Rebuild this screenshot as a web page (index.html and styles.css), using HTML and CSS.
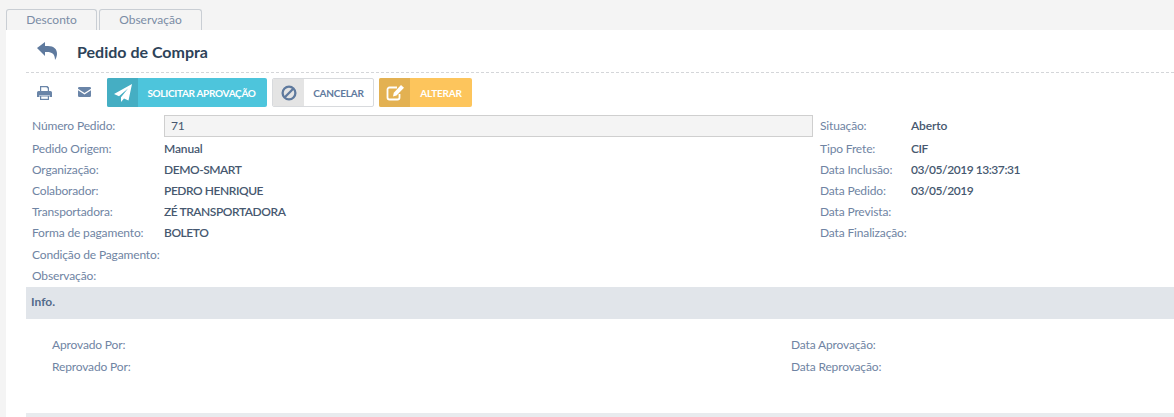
FILE: index.html
```html
<!DOCTYPE html>
<html>
<head>
    <meta charset="utf-8">
    <title>Pedido de Compra</title>
    <link rel="stylesheet" href="styles.css">
</head>
<body>
    <div class="tabs">
        <div class="tab tab-first">Desconto</div>
        <div class="tab tab-second">Observação</div>
    </div>
    <div class="panel">
        <div class="head">
            <svg class="back" viewBox="0 0 20 18"><path d="M0 6 8 0v4h3c6 0 9 3 9 8 0 2-1 4.500-2 6 0-6-3-8-8-8H8v4z" fill="#5f7a9e"/></svg>
            <h1 class="title">Pedido de Compra</h1>
        </div>
        <div class="toolbar">
            <svg class="ico-print" viewBox="0 0 15 14"><path d="M3 0h7.500L12 1.500V6H3zM4.200 1.200v3.800h6.600V2.200H9.800v-1z" fill="#6a85a8" fill-rule="evenodd"/><path d="M1.500 5h12A1.500 1.500 0 0 1 15 6.500V11h-2.500V9h-10v2H0V6.500A1.500 1.500 0 0 1 1.500 5z" fill="#6a85a8"/><path d="M3 9.500h9V14H3z" fill="#6a85a8"/><path d="M4.200 10.500h6.600v2.300H4.200z" fill="#fff"/></svg>
            <svg class="ico-mail" viewBox="0 0 13 10"><path d="M1.200 0h10.600A1.200 1.200 0 0 1 13 1.200v.6L6.500 6 0 1.800v-.6A1.200 1.200 0 0 1 1.200 0z" fill="#6a85a8"/><path d="M0 3.200 6.500 7.400 13 3.200v5.600A1.200 1.200 0 0 1 11.800 10H1.200A1.200 1.200 0 0 1 0 8.800z" fill="#6a85a8"/></svg>
            <button class="btn btn-info">
                <span class="btn-ico">
                    <svg width="18" height="18" viewBox="0 0 18 18"><path d="M18 0 0 10 5 12.200 14 4.500 7 13.200V18L10 14.500 14.500 16.500z" fill="#fff"/></svg>
                </span>
                <span class="btn-txt">SOLICITAR APROVAÇÃO</span>
            </button>
            <button class="btn btn-cancel">
                <span class="btn-ico">
                    <svg width="16" height="16" viewBox="0 0 16 16"><circle cx="8" cy="8" r="6.400" fill="none" stroke="#5f7a9e" stroke-width="2.300"/><path d="M3.800 12.200 12.200 3.800" stroke="#5f7a9e" stroke-width="2.300"/></svg>
                </span>
                <span class="btn-txt">CANCELAR</span>
            </button>
            <button class="btn btn-warn">
                <span class="btn-ico">
                    <svg width="18" height="16" viewBox="0 0 18 16"><path d="M11 2.500H3.500a2 2 0 0 0-2 2v8a2 2 0 0 0 2 2h8a2 2 0 0 0 2-2V9" fill="none" stroke="#fff" stroke-width="1.800"/><path d="M15 0 18 2.800 10.500 10.500 7 11.500 7.800 7.800z" fill="#fff"/></svg>
                </span>
                <span class="btn-txt">ALTERAR</span>
            </button>
        </div>
        <div class="form">
            <div class="col-left">
                <div class="row row-input">
                    <label class="lbl">Número Pedido:</label>
                    <div class="input">71</div>
                </div>
                <div class="row"><label class="lbl">Pedido Origem:</label><span class="val">Manual</span></div>
                <div class="row"><label class="lbl">Organização:</label><span class="val val-caps">DEMO-SMART</span></div>
                <div class="row"><label class="lbl">Colaborador:</label><span class="val val-caps">PEDRO HENRIQUE</span></div>
                <div class="row"><label class="lbl">Transportadora:</label><span class="val val-caps">ZÉ TRANSPORTADORA</span></div>
                <div class="row"><label class="lbl">Forma de pagamento:</label><span class="val val-caps">BOLETO</span></div>
                <div class="row row-next"><label class="lbl">Condição de Pagamento:</label></div>
                <div class="row"><label class="lbl">Observação:</label></div>
            </div>
            <div class="col-right">
                <div class="row row-input"><label class="lbl lbl-s">Situação:</label><span class="val">Aberto</span></div>
                <div class="row"><label class="lbl lbl-s">Tipo Frete:</label><span class="val val-caps">CIF</span></div>
                <div class="row"><label class="lbl lbl-s">Data Inclusão:</label><span class="val val-caps">03/05/2019 13:37:31</span></div>
                <div class="row"><label class="lbl lbl-s">Data Pedido:</label><span class="val val-caps">03/05/2019</span></div>
                <div class="row"><label class="lbl lbl-s">Data Prevista:</label></div>
                <div class="row"><label class="lbl lbl-s">Data Finalização:</label></div>
            </div>
        </div>
        <div class="section">Info.</div>
        <div class="info">
            <div class="info-col">
                <div class="info-row">Aprovado Por:</div>
                <div class="info-row">Reprovado Por:</div>
            </div>
            <div class="info-col-right">
                <div class="info-row">Data Aprovação:</div>
                <div class="info-row">Data Reprovação:</div>
            </div>
        </div>
        <div class="strip"></div>
    </div>
</body>
</html>
```
FILE: styles.css
```css
html, body {
    height: 100%;
}

body {
    margin: 0;
    height: 417px;
    overflow: hidden;
    background: #f4f4f4;
    font-family: "Lato", "Open Sans", sans-serif;
    font-size: 12px;
    letter-spacing: -0.15px;
    color: #6f84a3;
}

.tabs {
    display: flex;
    gap: 2px;
    height: 21px;
    padding: 9px 0 0 6px;
}

.tab {
    box-sizing: border-box;
    height: 21px;
    padding-top: 2px;
    border: 1px solid #c9ced4;
    border-bottom: none;
    border-radius: 3px 3px 0 0;
    background: #f4f4f4;
    text-align: center;
    line-height: 16px;
    letter-spacing: 0;
    color: #7b8ca5;
}

.tab-first {
    width: 91px;
}

.tab-second {
    width: 103px;
}

.panel {
    margin-left: 6px;
    padding-left: 20px;
    height: 387px;
    background: #fff;
}

.head {
    display: flex;
    align-items: center;
    height: 42px;
    border-bottom: 1px dashed #d4d6d9;
}

.back {
    width: 20px;
    height: 18px;
    margin: 0 0 0 11px;
}

.title {
    margin: 0 0 0 20px;
    font-size: 16px;
    font-weight: 700;
    letter-spacing: 0;
    color: #2d4359;
}

.toolbar {
    display: flex;
    align-items: center;
    height: 29px;
    margin-top: 5px;
}

.ico-print {
    width: 15px;
    height: 14px;
    margin-left: 11px;
}

.ico-mail {
    width: 13px;
    height: 10px;
    margin: 0 0 1px 26px;
}

.btn {
    display: flex;
    box-sizing: border-box;
    height: 29px;
    padding: 0;
    border: none;
    border-radius: 2px;
    overflow: hidden;
    font-family: inherit;
    font-size: 10px;
    font-weight: 700;
    letter-spacing: -0.2px;
}

.btn-ico {
    display: flex;
    align-items: center;
    justify-content: center;
    width: 31px;
    height: 100%;
}

.btn-txt {
    flex: 1;
    align-self: center;
    text-align: center;
}

.btn-info {
    width: 160px;
    margin-left: 16px;
    background: #4dc5dc;
    color: #fff;
    letter-spacing: -0.3px;
}

.btn-info .btn-txt {
    padding-right: 2px;
}

.btn-info .btn-ico {
    background: #45aec3;
}

.btn-cancel {
    width: 102px;
    margin-left: 5px;
    border: 1px solid #d8dadd;
    background: #fff;
    color: #5f7a9e;
}

.btn-cancel .btn-ico {
    background: #e4e4e4;
}

.btn-warn {
    width: 93px;
    margin-left: 5px;
    background: #fdc55c;
    color: #fff;
}

.btn-warn .btn-ico {
    background: #e3b152;
}

.form {
    display: flex;
    height: 173px;
    margin-top: 7px;
    padding-left: 6px;
}

.col-left {
    width: 781px;
    flex: none;
}

.col-right {
    margin-left: 7px;
}

.row {
    display: flex;
    align-items: center;
    height: 21px;
}

.row-input {
    height: 23px;
    margin-bottom: 1px;
}

.row-next {
    margin-top: 1px;
}

.lbl {
    width: 132px;
    flex: none;
}

.lbl-s {
    width: 91px;
}

.val {
    font-weight: 600;
    color: #46586f;
}

.val-caps {
    letter-spacing: -0.45px;
}

.input {
    flex: 1;
    box-sizing: border-box;
    height: 22px;
    padding-left: 6px;
    border: 1px solid #cfcfcf;
    background: #f4f4f4;
    line-height: 20px;
    color: #46586f;
}

.section {
    height: 32px;
    padding-left: 5px;
    background: #e1e5ea;
    line-height: 30px;
    font-weight: 700;
    letter-spacing: 0;
    color: #536b8a;
}

.info {
    display: flex;
    height: 94px;
    padding: 15px 0 0 26px;
    box-sizing: border-box;
}

.info-col {
    width: 739px;
    flex: none;
}

.info-col-right {
    flex: 1;
    min-width: 0;
}

.info-row {
    height: 22px;
    line-height: 21px;
}

.strip {
    height: 4px;
    background: #e8ebee;
}
```
